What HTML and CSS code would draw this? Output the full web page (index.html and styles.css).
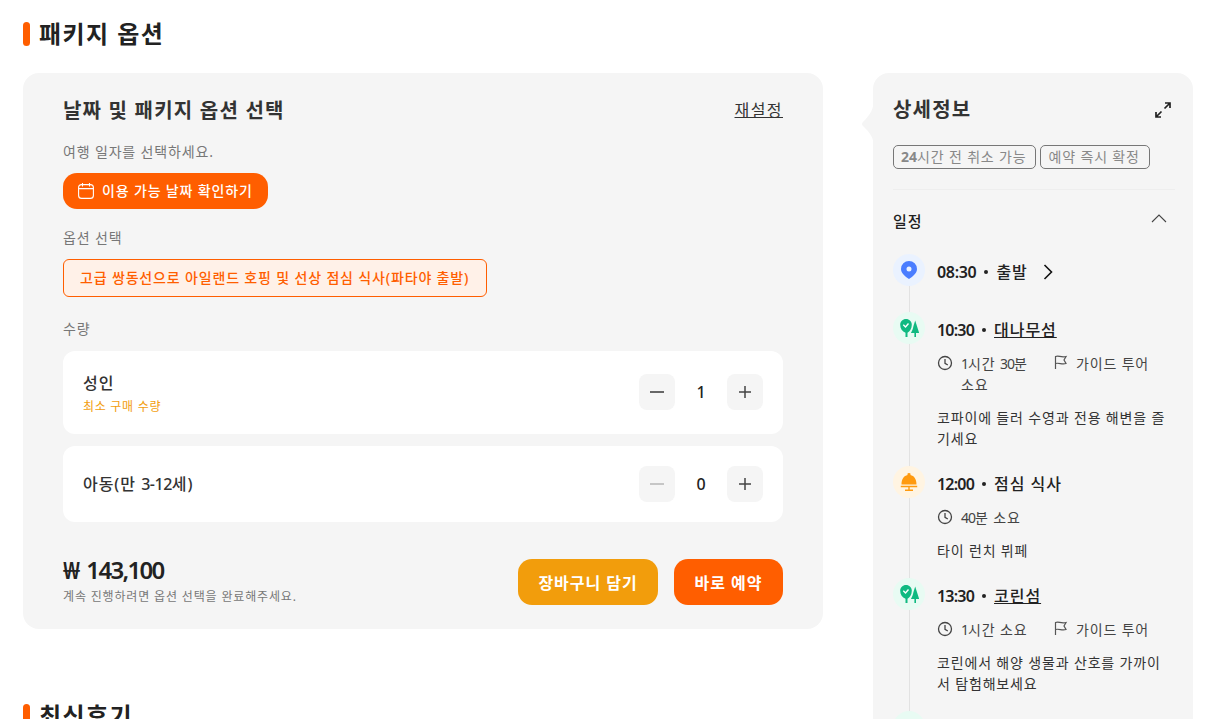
FILE: index.html
```html
<!DOCTYPE html>
<html lang="ko">
<head>
<meta charset="utf-8">
<title>패키지 옵션</title>
<link rel="stylesheet" href="styles.css">
</head>
<body>
<div class="page">
  <main class="main">
    <h2 class="section-title">패키지 옵션</h2>
    <section class="card">
      <div class="card-head">
        <h3 class="card-title">날짜 및 패키지 옵션 선택</h3>
        <a class="reset">재설정</a>
      </div>
      <p class="label label-date">여행 일자를 선택하세요.</p>
      <button class="date-btn">
        <svg class="cal" viewBox="0 0 16 16" fill="none" stroke="#fff" stroke-width="1.1"><rect x="0.6" y="1.6" width="14.8" height="13.8" rx="3"/><path d="M0.8 5.6h14.4M4.500 0v3M11.500 0v3" stroke-linecap="round"/></svg>
        이용 가능 날짜 확인하기
      </button>
      <p class="label label-option">옵션 선택</p>
      <div class="option">고급 쌍동선으로 아일랜드 호핑 및 선상 점심 식사(파타야 출발)</div>
      <p class="label label-qty">수량</p>
      <div class="qty-row qty-adult">
        <div class="qty-info">
          <div class="qty-name">성인</div>
          <div class="qty-min">최소 구매 수량</div>
        </div>
        <div class="stepper">
          <button class="step"><svg viewBox="0 0 14 14" stroke="#444" stroke-width="1.6"><path d="M0 7h14"/></svg></button>
          <span class="count">1</span>
          <button class="step"><svg class="plus" viewBox="0 0 12 12" stroke="#444" stroke-width="1.5"><path d="M0 6h12M6 0v12"/></svg></button>
        </div>
      </div>
      <div class="qty-row qty-child">
        <div class="qty-name">아동(만 <span class="num">3-12</span>세)</div>
        <div class="stepper">
          <button class="step"><svg viewBox="0 0 14 14" stroke="#bbb" stroke-width="1.6"><path d="M0 7h14"/></svg></button>
          <span class="count">0</span>
          <button class="step"><svg class="plus" viewBox="0 0 12 12" stroke="#444" stroke-width="1.5"><path d="M0 6h12M6 0v12"/></svg></button>
        </div>
      </div>
      <div class="buy">
        <div>
          <div class="price">₩ <span class="num">143,100</span></div>
          <div class="price-note">계속 진행하려면 옵션 선택을 완료해주세요.</div>
        </div>
        <div class="buy-btns">
          <button class="btn btn-cart">장바구니 담기</button>
          <button class="btn btn-book">바로 예약</button>
        </div>
      </div>
    </section>
    <h2 class="section-title section-reviews">최신후기</h2>
  </main>

  <aside class="detail">
    <svg class="tail" viewBox="0 0 13 50" fill="#f5f5f5"><path d="M13 0C13 10 9 16 2 23Q0 25 2 27C9 34 13 38 13 50Z"/></svg>
    <div class="detail-head">
      <h3 class="detail-title">상세정보</h3>
      <svg class="expand" viewBox="0 0 16 16" fill="none" stroke="#222" stroke-width="1.7"><path d="M10 1h5v5M15 1L9.500 6.500M6 15H1v-5M1 15l5.500-5.500"/></svg>
    </div>
    <div class="tags"><span class="tag"><span class="num-bold">24</span>시간 전 취소 가능</span><span class="tag tag-second">예약 즉시 확정</span></div>
    <div class="schedule-head">
      <span class="schedule-title">일정</span>
      <svg class="chev-up" viewBox="0 0 16 9" fill="none" stroke="#444" stroke-width="1.1"><path d="M1 8l7-7 7 7"/></svg>
    </div>
    <ol class="timeline">
      <li class="stop">
        <div class="stop-head">
          <span class="dot dot-blue"><svg viewBox="0 0 16 18"><path fill="#4a7dff" fill-rule="evenodd" d="M8 0a8 8 0 0 1 8 8c0 4-4 7.500-8 10C4 15.500 0 12 0 8a8 8 0 0 1 8-8zm0 5.500a2.500 2.500 0 1 0 0 5 2.500 2.500 0 0 0 0-5z"/></svg></span>
          <span class="time time-wide">08:30</span><i class="sep"></i><span class="place">출발</span>
          <svg class="chev-right" viewBox="0 0 10 16" fill="none" stroke="#111" stroke-width="1.6"><path d="M1.500 1l7 7-7 7"/></svg>
        </div>
      </li>
      <li class="stop">
        <div class="stop-head">
          <span class="dot dot-green"><svg viewBox="0 0 20 18"><path fill="#10b981" d="M7 0c3.300 0 5.800 2.500 5.800 5.800 0 3.800-2 6.800-4.300 8V18H6.500v-4.200C3.200 12.600 1.200 9.600 1.200 5.800 1.200 2.500 3.700 0 7 0z"/><path fill="#10b981" d="M16.200 1.500l4 12.500h-3.200v4h-1.600v-4h-3.500c1.100-1.700 2-4.300 2.500-6.800z"/><path fill="none" stroke="#fff" stroke-width="1.400" d="M4.300 5.800l2.200 2.200 3-3.500"/></svg></span>
          <span class="time">10:30</span><i class="sep"></i><a class="place place-link">대나무섬</a>
        </div>
        <div class="meta">
          <div class="meta-item"><svg class="clock" viewBox="0 0 16 16" fill="none" stroke="#444" stroke-width="1.300"><circle cx="8" cy="8" r="6.500"/><path d="M8 4v4.300l2.800 1.700"/></svg><span><span class="num">1</span>시간 <span class="num">30</span>분 <span>소요</span></span></div>
          <div class="meta-item"><svg class="flag" viewBox="0 0 14 14" fill="none" stroke="#555" stroke-width="1.200"><path d="M1.500 14V1.500c3-1.500 5 1.200 10.500 0L10 5l2 3.500c-4 1.200-7-1-10.500 0"/></svg><span>가이드 투어</span></div>
        </div>
        <p class="desc">코파이에 들러 수영과 전용 해변을 즐기세요</p>
      </li>
      <li class="stop">
        <div class="stop-head">
          <span class="dot dot-amber"><svg viewBox="0 0 18 18"><path fill="#ff9a0f" d="M9 0a1.500 1.500 0 0 1 1.400 2C14 2.700 16.500 6 16.500 11.500h-15C1.500 6 4 2.700 7.600 2A1.500 1.500 0 0 1 9 0z"/><path fill="#ff9a0f" d="M.8 12.800h16.400v1.500H.8zM8.300 14h1.400v3H8.300zM5 16.500h8V18H5z"/></svg></span>
          <span class="time">12:00</span><i class="sep"></i><span class="place">점심 식사</span>
        </div>
        <div class="meta">
          <div class="meta-item"><svg class="clock" viewBox="0 0 16 16" fill="none" stroke="#444" stroke-width="1.300"><circle cx="8" cy="8" r="6.500"/><path d="M8 4v4.300l2.800 1.700"/></svg><span><span class="num">40</span>분 소요</span></div>
        </div>
        <p class="desc">타이 런치 뷔페</p>
      </li>
      <li class="stop">
        <div class="stop-head">
          <span class="dot dot-green"><svg viewBox="0 0 20 18"><path fill="#10b981" d="M7 0c3.300 0 5.800 2.500 5.800 5.800 0 3.800-2 6.800-4.300 8V18H6.500v-4.200C3.200 12.600 1.200 9.600 1.200 5.800 1.200 2.500 3.700 0 7 0z"/><path fill="#10b981" d="M16.200 1.500l4 12.500h-3.200v4h-1.600v-4h-3.500c1.100-1.700 2-4.300 2.500-6.800z"/><path fill="none" stroke="#fff" stroke-width="1.400" d="M4.300 5.800l2.200 2.200 3-3.500"/></svg></span>
          <span class="time">13:30</span><i class="sep"></i><a class="place place-link">코린섬</a>
        </div>
        <div class="meta">
          <div class="meta-item"><svg class="clock" viewBox="0 0 16 16" fill="none" stroke="#444" stroke-width="1.300"><circle cx="8" cy="8" r="6.500"/><path d="M8 4v4.300l2.800 1.700"/></svg><span><span class="num">1</span>시간 소요</span></div>
          <div class="meta-item"><svg class="flag" viewBox="0 0 14 14" fill="none" stroke="#555" stroke-width="1.200"><path d="M1.500 14V1.500c3-1.500 5 1.200 10.500 0L10 5l2 3.500c-4 1.200-7-1-10.500 0"/></svg><span>가이드 투어</span></div>
        </div>
        <p class="desc">코린에서 해양 생물과 산호를 가까이서 탐험해보세요</p>
      </li>
      <li class="stop">
        <div class="stop-head">
          <span class="dot dot-green"></span>
        </div>
      </li>
    </ol>
  </aside>
</div>
</body>
</html>
```
FILE: styles.css
```css
* { box-sizing: border-box; letter-spacing: .06em; }
html, body { margin: 0; height: 719px; overflow: hidden; background: #fff; }
body { font-family: "Noto Sans", "Noto Sans CJK KR", sans-serif; color: #222; }
h2, h3, p, ol { margin: 0; padding: 0; }
button { font-family: inherit; border: 0; cursor: pointer; }
.num { letter-spacing: -.07em; }
.num-bold { font-weight: 700; letter-spacing: 0; }

.page { display: flex; gap: 50px; padding: 0 23px; align-items: flex-start; }
.main { width: 800px; flex: none; padding-top: 22px; }

.section-title { position: relative; padding-left: 16px; height: 24px; font-size: 24px; line-height: 24px; font-weight: 700; color: #222; }
.section-title::before { content: ""; position: absolute; left: 0; top: 0; width: 7px; height: 24px; border-radius: 4px; background: #ff5e00; }
.section-reviews { margin-top: 75px; }

.card { margin-top: 27px; height: 556px; padding: 25px 40px 0; background: #f5f5f5; border-radius: 16px; }
.card-head { display: flex; justify-content: space-between; align-items: center; height: 26px; }
.card-title { font-size: 20px; line-height: 26px; font-weight: 700; color: #333; }
.reset { margin-bottom: 2px; font-size: 16px; line-height: 24px; letter-spacing: .09em; color: #333; text-decoration: underline; }
.label { font-size: 14px; line-height: 20px; color: #777; }
.label-date { margin-top: 18px; }
.date-btn { display: flex; align-items: center; gap: 8px; margin-top: 11px; height: 36px; padding: 0 15px 2px; border-radius: 14px; background: #ff5e00; color: #fff; font-size: 14px; font-weight: 500; }
.cal { width: 16px; height: 16px; margin-top: 2px; }
.label-option { margin-top: 19px; }
.option { width: 424px; height: 38px; margin-top: 11px; padding: 0 16px; border: 1px solid #ff5e00; border-radius: 6px; background: #fff1e8; color: #ff5e00; font-size: 14px; line-height: 36px; font-weight: 500; white-space: nowrap; }
.label-qty { margin-top: 22px; }

.qty-row { display: flex; justify-content: space-between; align-items: center; padding: 0 20px; background: #fff; border-radius: 12px; }
.qty-adult { height: 83px; margin-top: 12px; }
.qty-adult .stepper { margin-bottom: 1px; }
.qty-info { margin-top: 1px; }
.qty-child { height: 76px; margin-top: 12px; }
.qty-name { font-size: 16px; line-height: 24px; font-weight: 500; color: #333; }
.qty-name .num { letter-spacing: -.03em; }
.qty-min { margin-top: 4px; font-size: 12px; line-height: 16px; color: #f29d0c; }
.stepper { display: flex; align-items: center; }
.step { display: flex; align-items: center; justify-content: center; width: 36px; height: 36px; padding: 0; border-radius: 8px; background: #f5f5f5; }
.step svg { width: 14px; height: 14px; }
.step .plus { width: 12px; height: 12px; }
.count { width: 52px; padding-right: 1px; text-align: center; font-size: 16px; line-height: 20px; font-weight: 500; letter-spacing: -.07em; color: #222; }

.buy { display: flex; justify-content: space-between; align-items: center; margin-top: 36px; }
.price { font-size: 24px; line-height: 24px; font-weight: 600; letter-spacing: 0; color: #222; }
.price-note { margin-top: 6px; font-size: 12px; line-height: 18px; letter-spacing: .07em; color: #777; }
.buy-btns { display: flex; gap: 16px; }
.btn { height: 46px; border-radius: 14px; color: #fff; font-size: 16px; font-weight: 700; }
.btn-cart { width: 140px; background: #f29d0c; }
.btn-book { width: 109px; background: #ff5e00; }

.detail { position: relative; width: 320px; height: 800px; flex: none; margin-top: 73px; padding: 24px 20px 0; background: #f5f5f5; border-radius: 16px 16px 0 0; }
.tail { position: absolute; left: -12px; top: 26px; width: 13px; height: 50px; }
.detail-head { display: flex; justify-content: space-between; align-items: center; height: 26px; }
.detail-title { font-size: 20px; line-height: 26px; font-weight: 700; color: #333; }
.expand { width: 16px; height: 16px; margin-right: 2px; }
.tags { display: flex; gap: 4px; margin-top: 22px; padding-bottom: 20px; border-bottom: 1px solid #eee; margin-right: -2px; }
.tag { height: 24px; padding: 0 8px 0 7px; border: 1px solid #777; border-radius: 5px; font-size: 14px; line-height: 22px; color: #888; white-space: nowrap; }
.tag-second { padding: 0 9px 0 8px; }
.schedule-head { display: flex; justify-content: space-between; align-items: center; height: 24px; margin-top: 19px; }
.schedule-title { font-size: 15px; line-height: 24px; font-weight: 500; color: #222; }
.chev-up { width: 16px; height: 9px; margin: 0 6px 6px 0; }

.timeline { list-style: none; position: relative; margin-top: 21px; }
.timeline::before { content: ""; position: absolute; left: 16px; top: 16px; bottom: 0; width: 1px; background: #e2e2e2; }
.stop { position: relative; padding-bottom: 26px; }
.stop-head { display: flex; align-items: center; height: 32px; }
.dot { display: flex; align-items: center; justify-content: center; flex: none; width: 32px; height: 32px; border-radius: 50%; margin-right: 12px; }
.dot-blue { background: #eaf2ff; }
.dot-blue svg { width: 16px; height: 18px; }
.dot-green { background: #e8fbf3; }
.dot-green svg { width: 20px; height: 18px; }
.dot-amber { background: #fff4e2; }
.dot-amber svg { width: 18px; height: 18px; }
.time { margin-top: 4px; font-size: 16px; line-height: 24px; font-weight: 600; letter-spacing: -.05em; color: #222; }
.time-wide { letter-spacing: -.02em; }
.sep { width: 4px; height: 4px; margin: 4px 8px 0; border-radius: 50%; background: #222; }
.place { margin-top: 4px; font-size: 16px; line-height: 24px; font-weight: 500; color: #222; }
.place-link { text-decoration: underline; }
.chev-right { width: 10px; height: 16px; margin: 4px 0 0 15px; }
.meta { display: grid; grid-template-columns: 107px 107px; column-gap: 8px; margin: 9px 0 0 44px; }
.meta-item { display: flex; gap: 8px; font-size: 14px; line-height: 21px; color: #444; }
.clock { flex: none; width: 16px; height: 16px; margin-top: 2px; }
.flag { flex: none; width: 14px; height: 14px; margin: 2px 0 0 2px; }
.desc { margin: 12px 0 0 44px; font-size: 14px; line-height: 21px; color: #333; }
.stop:has(.desc) { padding-bottom: 17px; }
```
